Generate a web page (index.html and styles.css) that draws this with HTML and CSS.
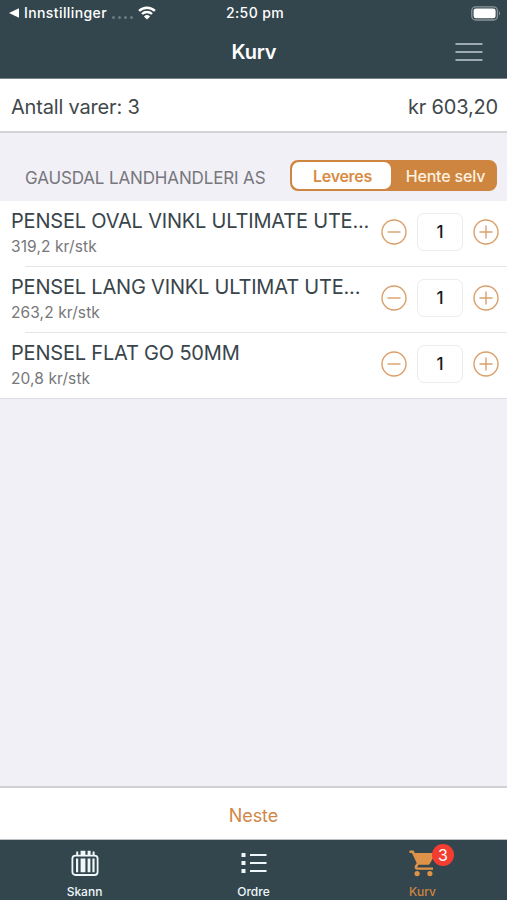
FILE: index.html
```html
<!DOCTYPE html>
<html lang="nb">
<head>
<meta charset="utf-8">
<meta name="viewport" content="width=device-width">
<title>Kurv</title>
<link rel="stylesheet" href="styles.css">
</head>
<body>
<svg class="symbols" aria-hidden="true">
  <symbol id="minus" viewBox="0 0 26 26"><circle cx="13" cy="13" r="12"/><path d="M6.5 13h13"/></symbol>
  <symbol id="plus" viewBox="0 0 26 26"><circle cx="13" cy="13" r="12"/><path d="M6.5 13h13M13 6.5v13"/></symbol>
</svg>
<div class="app">
  <header class="header">
    <div class="status">
      <div class="status-left">
        <svg class="back" viewBox="0 0 10 10"><path d="M0 5 10 .2v9.6z"/></svg>
        <span class="carrier">Innstillinger</span>
        <span class="signal"><i></i><i></i><i></i><i></i></span>
        <svg class="wifi" viewBox="0 0 18 14"><path class="arc" d="M1.1 4.9a11.3 11.3 0 0 1 15.8 0M4 8a7.1 7.1 0 0 1 10 0"/><path d="M9 13.6 5.9 10.4a4.5 4.5 0 0 1 6.2 0z"/></svg>
      </div>
      <span class="time">2:50 pm</span>
      <svg class="battery" viewBox="0 0 30 15"><rect class="shell" x=".8" y=".8" width="25.6" height="13.2" rx="3.8"/><rect x="2.6" y="2.6" width="22" height="9.6" rx="2.2"/><path class="tip" d="M28 5.2c1.4.6 1.4 3.8 0 4.4z"/></svg>
    </div>
    <div class="navbar">
      <h1 class="title">Kurv</h1>
      <button class="menu" aria-label="Meny"><svg viewBox="0 0 28 18"><path d="M.5 1h27M.5 9h27M.5 17h27"/></svg></button>
    </div>
  </header>
  <section class="summary"><span class="count">Antall varer: 3</span><span class="total">kr 603,20</span></section>
  <main class="content">
    <div class="store">
      <h2 class="store-name">GAUSDAL LANDHANDLERI AS</h2>
      <div class="segments"><button class="segment active">Leveres</button><button class="segment">Hente selv</button></div>
    </div>
    <ul class="items">
      <li class="item">
        <div class="info"><div class="name">PENSEL OVAL VINKL ULTIMATE UTE...</div><div class="price">319,2 kr/stk</div></div>
        <div class="stepper"><svg class="round"><use href="#minus"/></svg><span class="qty">1</span><svg class="round"><use href="#plus"/></svg></div>
      </li>
      <li class="item">
        <div class="info"><div class="name">PENSEL LANG VINKL ULTIMAT UTE...</div><div class="price">263,2 kr/stk</div></div>
        <div class="stepper"><svg class="round"><use href="#minus"/></svg><span class="qty">1</span><svg class="round"><use href="#plus"/></svg></div>
      </li>
      <li class="item">
        <div class="info"><div class="name">PENSEL FLAT GO 50MM</div><div class="price">20,8 kr/stk</div></div>
        <div class="stepper"><svg class="round"><use href="#minus"/></svg><span class="qty">1</span><svg class="round"><use href="#plus"/></svg></div>
      </li>
    </ul>
  </main>
  <button class="next"><span>Neste</span></button>
  <nav class="tabs">
    <a class="tab">
      <svg class="icon" viewBox="0 0 28 28"><rect class="line" x="1.4" y="5.6" width="25.2" height="19.4" rx="3"/><path d="M5.2 1.6h2V5h-2zM9.6.8h4.8V5H9.6zM16.6.8h3V5h-3zM21.6 1.6h2V5h-2zM5 8.5h2.2v13.8H5zM9.6 8.5h4.8v13.8H9.6zM16.6 8.5h2.8v13.8h-2.8zM21.4 8.5h2.2v13.8h-2.2z"/></svg>
      <span>Skann</span>
    </a>
    <a class="tab">
      <svg class="icon" viewBox="0 0 28 28"><path d="M1.5 3h4v4h-4zM1.5 11h4v4h-4zM1.5 19h4v4h-4zM10 4h16.5v2H10zM10 12h16.5v2H10zM10 20h16.5v2H10z"/></svg>
      <span>Ordre</span>
    </a>
    <a class="tab selected">
      <svg class="icon" viewBox="0 0 28 28"><path d="M.5.5V3H3l4.7 9.9-1.8 3.2c-.9 1.7.2 3.7 2.1 3.7h16v-2.4H8.6c-.3 0-.4-.3-.3-.5l1.2-2.2h9.3c1 0 1.8-.5 2.2-1.3L25.6 5c.5-.9-.1-1.9-1.1-1.9H5.8L4.6.5zM8.1 21a2.6 2.6 0 1 0 0 5.2 2.6 2.6 0 0 0 0-5.2zm12.8 0a2.6 2.6 0 1 0 0 5.2 2.6 2.6 0 0 0 0-5.2z"/></svg>
      <b class="badge">3</b>
      <span>Kurv</span>
    </a>
  </nav>
</div>
</body>
</html>
```
FILE: styles.css
```css
* { box-sizing: border-box; }
body { margin: 0; font-family: Inter, "Liberation Sans", sans-serif; color: #41484b; }
button { border: 0; padding: 0; background: none; font: inherit; color: inherit; }
h1, h2, ul { margin: 0; padding: 0; font-weight: 400; }
svg { display: block; }
.symbols { position: absolute; width: 0; height: 0; }
.app { display: flex; flex-direction: column; width: 507px; height: 900px; overflow: hidden; background: #f1f0f6; white-space: nowrap; }
.header { height: 79px; background: #34464d; border-bottom: 1px solid #75828a; color: #fff; }
.status { display: grid; grid-template-columns: 1fr auto 1fr; align-items: center; height: 26px; padding: 0 6px 0 9px; }
.status-left { display: flex; align-items: center; }
.back { width: 10px; height: 10px; fill: #fff; margin-right: 5px; }
.carrier { font-size: 14px; font-weight: 500; letter-spacing: .4px; line-height: 26px; }
.signal { display: flex; gap: 3px; margin: 8px 5px 0 5px; }
.signal i { width: 3px; height: 3px; border-radius: 50%; background: #6b7a80; }
.wifi { width: 18px; height: 14px; fill: #fff; }
.arc { fill: none; stroke: #fff; stroke-width: 2.4; }
.time { font-size: 14px; font-weight: 500; letter-spacing: .4px; line-height: 26px; }
.battery { justify-self: end; width: 30px; height: 15px; fill: #fff; }
.shell { fill: none; stroke: #89959a; stroke-width: 1.3; }
.tip { fill: #89959a; }
.navbar { display: grid; grid-template-columns: 1fr auto 1fr; align-items: center; height: 52px; padding: 0 24px; }
.title { grid-column: 2; padding-left: 1px; font-size: 20px; font-weight: 600; letter-spacing: -.2px; line-height: 52px; }
.menu { justify-self: end; }
.menu svg { width: 28px; height: 18px; stroke: #bdcdd2; stroke-width: 1.5; }
.summary { display: flex; justify-content: space-between; height: 54px; padding: 0 9px 0 11px; border-bottom: 2px solid #d3d3d5; background: #fff; font-size: 20px; letter-spacing: -.18px; line-height: 56px; }
.content { flex: 1; }
.store { display: flex; justify-content: space-between; height: 68px; padding: 27px 10px 0 25px; }
.store-name { color: #77777c; font-size: 17px; letter-spacing: -.14px; line-height: 36px; }
.segments { display: flex; width: 207px; height: 31px; border: 2px solid #ce8540; border-radius: 8px; background: #ce8540; }
.segment { width: 99px; border-radius: 7px; color: #fff1df; font-size: 16px; font-weight: 500; letter-spacing: -.15px; line-height: 28px; }
.segment + .segment { width: 104px; padding-left: 5px; }
.active { padding-left: 2px; background: #fff; color: #d98a43; font-weight: 600; letter-spacing: -.3px; }
.items { list-style: none; background: #fff; border-bottom: 1px solid #dedee2; }
.item { display: flex; justify-content: space-between; height: 66px; padding-left: 11px; background: linear-gradient(#e5e5e8, #e5e5e8) 25px 100% / 100% 1px no-repeat; }
.item:last-child { height: 65px; background: none; }
.name { color: #39454b; font-size: 20px; letter-spacing: -.19px; line-height: 26px; margin-top: 7px; }
.price { color: #77777a; font-size: 15.5px; letter-spacing: .1px; line-height: 22px; margin-top: 2px; }
.stepper { display: flex; align-items: center; gap: 10px; height: 62px; padding-right: 8px; }
.round { width: 26px; height: 26px; fill: none; stroke: #daa06b; stroke-width: 1.4; }
.qty { width: 46px; height: 38px; border: 1px solid #ececef; border-radius: 7px; text-align: center; color: #16191b; font-size: 17px; font-weight: 500; line-height: 36px; }
.next { height: 54px; border-top: 2px solid #d0d0d4; border-bottom: 1px solid #bcc2c5; background: #fff; color: #cf8748; font-size: 18px; letter-spacing: -.1px; line-height: 55px; }
.tabs { display: grid; grid-template-columns: repeat(3, 1fr); height: 60px; background: #34464d; color: #eef8fb; }
.tab { position: relative; display: flex; flex-direction: column; align-items: center; padding-top: 10px; font-size: 12px; font-weight: 500; line-height: 15px; }
.tab span { margin-top: 6px; }
.icon { width: 28px; height: 28px; fill: currentColor; }
.line { fill: none; stroke: currentColor; stroke-width: 1.8; }
.selected { color: #cd8442; }
.selected .icon { fill: #df9348; }
.badge { position: absolute; left: 94px; top: 4px; width: 22px; height: 22px; border-radius: 50%; background: #f43d31; color: #fff; font-size: 16px; font-weight: 400; line-height: 22px; text-align: center; }
```
